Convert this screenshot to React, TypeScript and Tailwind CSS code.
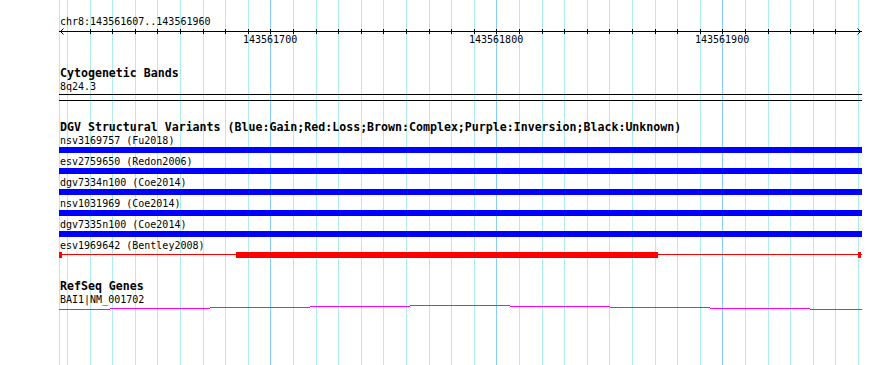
const ORIGIN_BP = 143561700;
const ORIGIN_X = 270.3;
const PX_PER_BP = 2.26;
const toX = (bp: number) => Math.round(ORIGIN_X + (bp - ORIGIN_BP) * PX_PER_BP);

const LEFT = 59;
const RIGHT = 861;
const TRACK_W = RIGHT - LEFT + 1;

const gridStops = Array.from({ length: 36 }, (_, i) => 143561610 + i * 10);
const tickStops = gridStops.filter((bp) => bp >= 143561620 && bp <= 143561950);
const majorStops = [143561700, 143561800, 143561900];

const variants = [
  { id: 'nsv3169757', study: 'Fu2018', kind: 'gain' },
  { id: 'esv2759650', study: 'Redon2006', kind: 'gain' },
  { id: 'dgv7334n100', study: 'Coe2014', kind: 'gain' },
  { id: 'nsv1031969', study: 'Coe2014', kind: 'gain' },
  { id: 'dgv7335n100', study: 'Coe2014', kind: 'gain' },
  { id: 'esv1969642', study: 'Bentley2008', kind: 'loss' },
];

// gene model drawn as a stepped line, y is relative to the svg top
const geneSteps = [
  { from: 59, to: 110, y: 4 },
  { from: 110, to: 210, y: 3 },
  { from: 210, to: 310, y: 2 },
  { from: 310, to: 410, y: 1 },
  { from: 410, to: 510, y: 0 },
  { from: 510, to: 610, y: 1 },
  { from: 610, to: 710, y: 2 },
  { from: 710, to: 810, y: 3 },
  { from: 810, to: 862, y: 4 },
];

function Grid() {
  return (
    <svg className="absolute left-0 top-0" width={890} height={365} shapeRendering="crispEdges">
      <line x1={LEFT + 0.5} x2={LEFT + 0.5} y1={0} y2={365} stroke="#afeeee" />
      {gridStops.map((bp) => (
        <line
          key={bp}
          x1={toX(bp) + 0.5}
          x2={toX(bp) + 0.5}
          y1={0}
          y2={365}
          stroke={majorStops.includes(bp) ? '#87cefa' : '#afeeee'}
        />
      ))}
    </svg>
  );
}

function Ruler() {
  // svg coordinates are page x, so it's pulled back over the left margin
  return (
    <div className="relative h-[28px]">
      <svg className="absolute top-0 -left-[59px]" width={890} height={8}>
        <g shapeRendering="crispEdges">
          <line x1={LEFT} x2={RIGHT + 1} y1={3.5} y2={3.5} stroke="#000" />
          {tickStops.map((bp) => (
            <line key={bp} x1={toX(bp) + 0.5} x2={toX(bp) + 0.5} y1={1} y2={6} stroke="#000" />
          ))}
        </g>
        <polyline points="63.5,0.5 60.5,3.5 63.5,6.5" fill="none" stroke="#000" />
        <polyline points="857.5,0.5 860.5,3.5 857.5,6.5" fill="none" stroke="#000" />
      </svg>
      {majorStops.map((bp) => (
        <span
          key={bp}
          className="absolute top-[5px] w-[54px] text-center"
          style={{ left: toX(bp) - 27 - LEFT }}
        >
          {bp}
        </span>
      ))}
    </div>
  );
}

function LossBar() {
  return (
    <svg width={TRACK_W} height={6} shapeRendering="crispEdges" className="block">
      <rect x={0} y={2} width={TRACK_W} height={1} fill="#ff0000" />
      <rect x={0} y={0} width={3} height={6} fill="#ff0000" />
      <rect x={TRACK_W - 4} y={0} width={3} height={6} fill="#ff0000" />
      <rect x={236 - LEFT} y={0} width={658 - 236} height={6} fill="#ff0000" />
    </svg>
  );
}

export default function App() {
  return (
    <div className="relative h-[365px] w-[890px] overflow-hidden bg-white font-['DejaVu_Sans_Mono',monospace] text-[10px] leading-[13px] text-black">
      <Grid />

      <div className="relative pl-[59px]">
        <div className="pt-[15px] pl-[1px]">chr8:143561607..143561960</div>
        <Ruler />

        {/* Cytogenetic Bands */}
        <div className="mt-[11px] pl-[1px] text-[11.6px] font-bold">Cytogenetic Bands</div>
        <div className="pl-[1px]">8q24.3</div>
        <div className="mt-[1px] h-[7px] w-[803px] border-y border-black" />

        {/* DGV */}
        <div className="mt-[20px] pl-[1px] text-[11.6px] font-bold whitespace-nowrap">
          DGV Structural Variants (Blue:Gain;Red:Loss;Brown:Complex;Purple:Inversion;Black:Unknown)
        </div>
        <div className="flex flex-col gap-[2px]">
          {variants.map((v) => (
            <div key={v.id}>
              <div className="pl-[1px]">
                {v.id} ({v.study})
              </div>
              {v.kind === 'gain' ? (
                <div className="h-[6px] w-[803px] bg-[#0000ff]" />
              ) : (
                <LossBar />
              )}
            </div>
          ))}
        </div>

        {/* RefSeq */}
        <div className="mt-[22px] pl-[1px] text-[11.6px] font-bold">RefSeq Genes</div>
        <div className="pl-[1px]">BAI1|NM_001702</div>
        <svg width={TRACK_W} height={5} shapeRendering="crispEdges" className="-mt-[1px] block">
          {geneSteps.map((s) => (
            <rect key={s.from} x={s.from - LEFT} y={s.y} width={s.to - s.from} height={1} fill="#ff00ff" />
          ))}
        </svg>
      </div>
    </div>
  );
}
